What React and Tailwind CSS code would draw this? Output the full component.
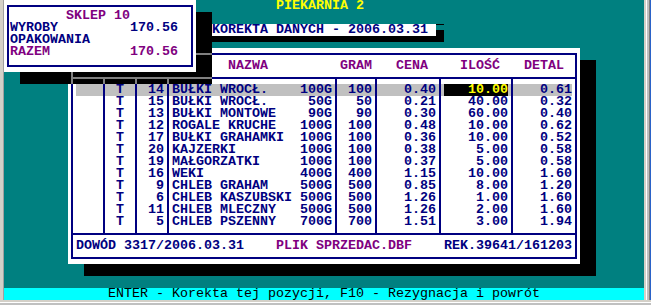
import React from "react";

const ROWS = [
  ["14", "BUŁKI WROCŁ.", "100G", "100", "0.40", "10.00", "0.61"],
  ["15", "BUŁKI WROCŁ.", "50G", "50", "0.21", "40.00", "0.32"],
  ["13", "BUŁKI MONTOWE", "90G", "90", "0.30", "60.00", "0.40"],
  ["12", "ROGALE KRUCHE", "100G", "100", "0.48", "10.00", "0.62"],
  ["17", "BUŁKI GRAHAMKI", "100G", "100", "0.36", "10.00", "0.52"],
  ["20", "KAJZERKI", "100G", "100", "0.38", "5.00", "0.58"],
  ["19", "MAŁGORZATKI", "100G", "100", "0.37", "5.00", "0.58"],
  ["16", "WEKI", "400G", "400", "1.15", "10.00", "1.60"],
  ["9", "CHLEB GRAHAM", "500G", "500", "0.85", "8.00", "1.20"],
  ["6", "CHLEB KASZUBSKI", "500G", "500", "1.26", "1.00", "1.60"],
  ["11", "CHLEB MLECZNY", "500G", "500", "1.26", "2.00", "1.60"],
  ["5", "CHLEB PSZENNY", "700G", "700", "1.51", "3.00", "1.94"],
];

function Row({ r, hl, spacer }) {
  const bg = hl ? "bg-[#c0c0c0]" : "bg-white";
  const h = spacer ? "h-[5px]" : "h-[12px]";
  return (
    <div className={`flex ${h}`}>
      <div className={`w-[32px] shrink-0 border-l-[3px] border-l-white border-r-2 border-r-[#000080] ${bg}`} />
      <div className={`w-[32px] shrink-0 border-r-2 border-r-[#000080] text-center ${bg}`}>{r ? "T" : ""}</div>
      <div className={`w-[32px] shrink-0 border-r-2 border-r-[#000080] text-right pr-[3px] ${bg}`}>{r ? r[0] : ""}</div>
      <div className={`w-[168px] shrink-0 border-r-2 border-r-[#000080] flex justify-between pl-[3px] pr-[3px] whitespace-pre ${bg}`}>
        <span>{r ? r[1] : ""}</span>
        <span>{r ? r[2] : ""}</span>
      </div>
      <div className={`w-[40px] shrink-0 border-r-2 border-r-[#000080] text-right pr-[3px] ${bg}`}>{r ? r[3] : ""}</div>
      <div className={`w-[64px] shrink-0 border-r-2 border-r-[#000080] text-right pr-[3px] ${bg}`}>{r ? r[4] : ""}</div>
      <div className={`w-[72px] shrink-0 border-r-2 border-r-[#000080] px-[3px] ${bg}`}>
        {hl ? (
          <div className="h-full bg-black text-[#ffff00] text-right">{r[5]}</div>
        ) : (
          <div className="h-full text-right">{r ? r[5] : ""}</div>
        )}
      </div>
      <div className={`w-[62px] shrink-0 border-r-[3px] border-r-white text-right ${bg}`}>{r ? r[6] : ""}</div>
    </div>
  );
}

export default function App() {
  return (
    <div className="w-[651px] h-[305px] flex flex-col bg-[#d4d0c8] overflow-hidden font-['Liberation_Mono','DejaVu_Sans_Mono',monospace] text-[13.333px] leading-[12px] font-bold">
      <div className="flex h-[300px]">
        {/* left frame */}
        <div className="w-[4px] flex">
          <div className="w-[3px] bg-[#d4d0c8]" />
          <div className="w-[1px] bg-[#a0a0a0]" />
        </div>

        {/* text-mode screen */}
        <div className="relative w-[640px] h-[300px] bg-[#008080] flex flex-col">
          <div className="h-[12px] pl-[272px] text-[#ffff00] whitespace-pre">PIEKARNIA 2</div>
          <div className="flex-1" />
          <div className="h-[12px] bg-[#00ffff] pl-[104px] text-black font-normal whitespace-pre">
            ENTER - Korekta tej pozycji, F10 - Rezygnacja i powrót
          </div>

          {/* KOREKTA bar + half-block shadow */}
          <div className="absolute left-[208px] top-[24px] w-[224px] h-[12px] bg-white text-[#000080] whitespace-pre">
            KOREKTA DANYCH - 2006.03.31
          </div>
          <div className="absolute left-[432px] top-[24px] w-[8px] h-[1px] bg-black" />
          <div className="absolute left-[432px] top-[30px] w-[8px] h-[6px] bg-black" />
          <div className="absolute left-[208px] top-[36px] w-[232px] h-[6px] bg-black" />

          {/* main window shadow */}
          <div className="absolute left-[576px] top-[60px] w-[16px] h-[204px] bg-black" />
          <div className="absolute left-[80px] top-[264px] w-[512px] h-[12px] bg-black" />

          {/* main window */}
          <div className="absolute left-[64px] top-[48px] w-[512px] h-[216px] bg-white pt-[5px] px-[3px] pb-[5px] text-[#000080]">
            <div className="h-full border-2 border-[#000080] flex flex-col">
              <div className="h-[22px] pt-[5px] pl-[3px] whitespace-pre text-[#800080]">
                {"                   NAZWA         GRAM   CENA    ILOŚĆ   DETAL"}
              </div>
              <div className="border-y-2 border-[#000080]">
                <Row spacer />
                {ROWS.map((r, i) => (
                  <Row key={i} r={r} hl={i === 0} />
                ))}
                <Row spacer />
              </div>
              <div className="h-[22px] pt-[5px] pl-[3px] whitespace-pre">
                <span>DOWÓD 3317/2006.03.31    </span>
                <span className="text-[#800080]">PLIK SPRZEDAC.DBF</span>
                <span>    REK.39641/161203</span>
              </div>
            </div>
          </div>

          {/* SKLEP popup shadow (covers part of main window; box lines turn grey) */}
          <div className="absolute left-[192px] top-[12px] w-[16px] h-[60px] bg-black">
            <div className="absolute left-0 top-[41px] w-[16px] h-[2px] bg-[#808080]" />
          </div>
          <div className="absolute left-[16px] top-[72px] w-[192px] h-[12px] bg-black">
            <div className="absolute left-[51px] top-0 w-[2px] h-[12px] bg-[#808080]" />
            <div className="absolute left-[51px] top-[5px] w-[141px] h-[2px] bg-[#808080]" />
            <div className="absolute left-[83px] top-[5px] w-[2px] h-[7px] bg-[#808080]" />
            <div className="absolute left-[115px] top-[5px] w-[2px] h-[7px] bg-[#808080]" />
            <div className="absolute left-[147px] top-[5px] w-[2px] h-[7px] bg-[#808080]" />
          </div>

          {/* SKLEP popup */}
          <div className="absolute left-0 top-0 w-[192px] h-[72px] bg-white pt-[5px] px-[3px] pb-[5px]">
            <div className="h-full border-2 border-[#000080] pt-[3px] pl-[1px] whitespace-pre">
              <div className="h-[12px] text-[#800080]">{"       SKLEP 10"}</div>
              <div className="h-[12px] text-[#000080]">{"WYROBY         170.56"}</div>
              <div className="h-[12px] text-[#000080]">OPAKOWANIA</div>
              <div className="h-[12px] text-[#800080]">{"RAZEM          170.56"}</div>
            </div>
          </div>
        </div>

        {/* right frame */}
        <div className="w-[7px] flex">
          <div className="w-[2px] bg-[#d4d0c8]" />
          <div className="w-[1px] bg-white" />
          <div className="w-[2px] bg-[#c0c0c0]" />
          <div className="w-[1px] bg-[#808080]" />
          <div className="w-[1px] bg-[#2a62c8]" />
        </div>
      </div>
      {/* bottom frame */}
      <div className="h-[5px] flex flex-col">
        <div className="h-[2px] bg-[#d4d0c8]" />
        <div className="h-[1px] bg-white" />
        <div className="h-[2px] bg-[#c0c0c0]" />
      </div>
    </div>
  );
}
